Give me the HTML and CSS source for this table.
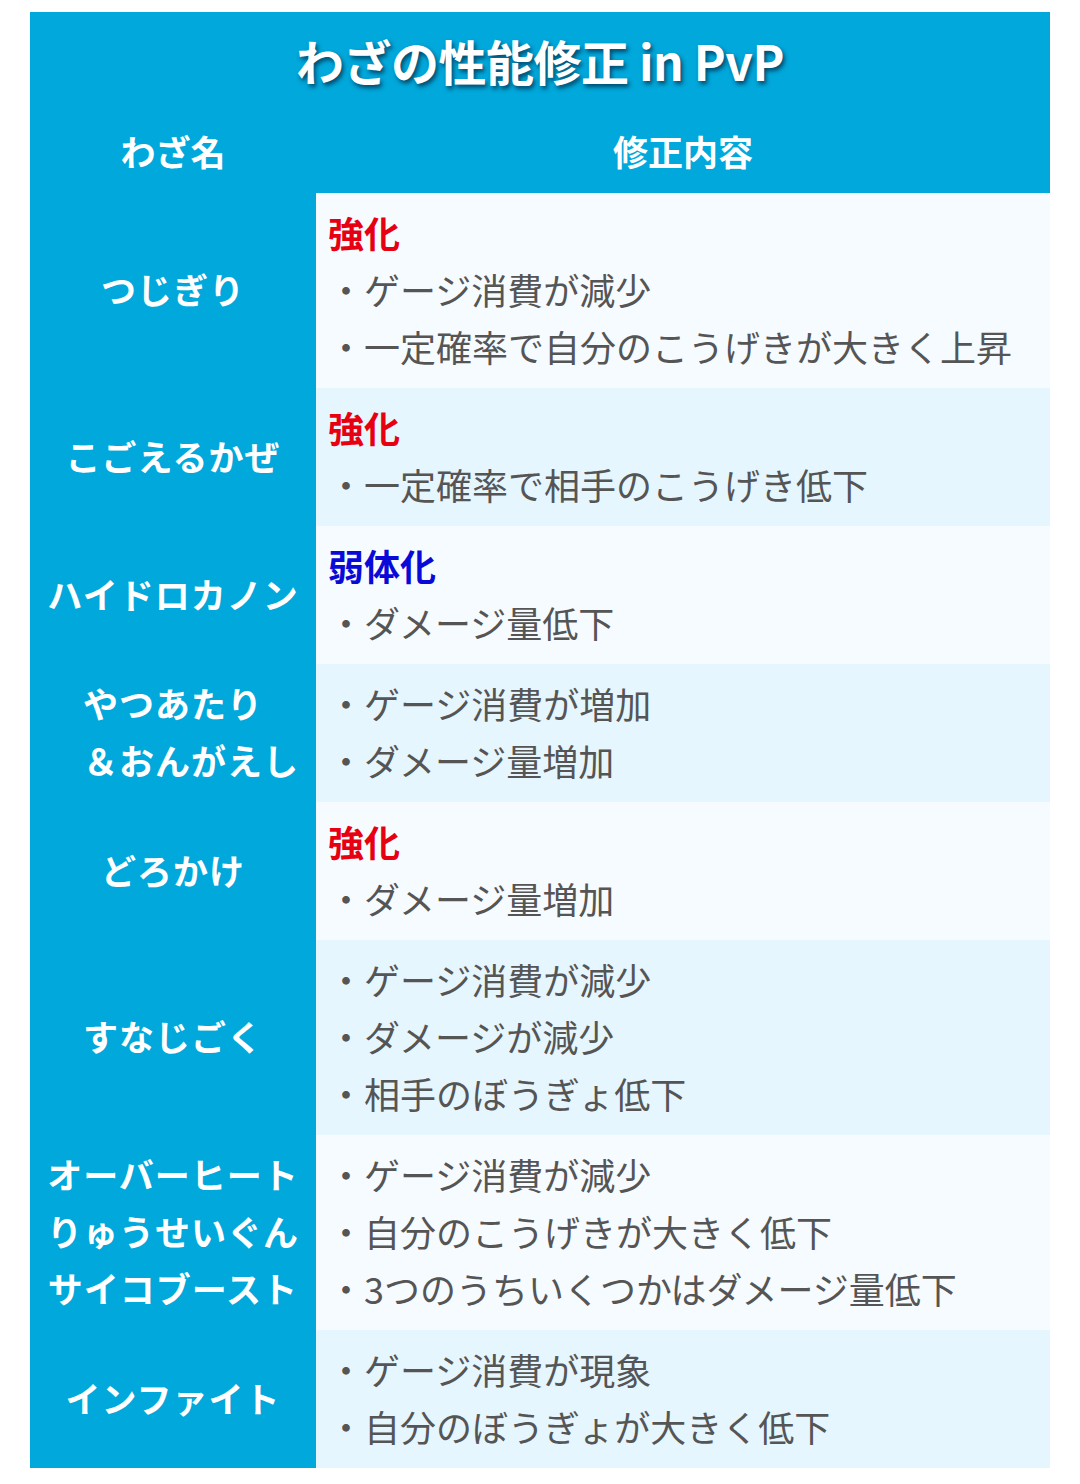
FILE: index.html
```html
<!DOCTYPE html>
<html lang="ja">
<head>
<meta charset="utf-8">
<link rel="stylesheet" href="styles.css">
</head>
<body>
<div class="board">
  <div class="title">わざの性能修正 in PvP</div>
  <div class="head">
    <div class="hname">わざ名</div>
    <div class="hdesc">修正内容</div>
  </div>
  <div class="row odd">
    <div class="name">つじぎり</div>
    <div class="desc">
      <div class="up">強化</div>
      <div>・ゲージ消費が減少</div>
      <div>・一定確率で自分のこうげきが大きく上昇</div>
    </div>
  </div>
  <div class="row even">
    <div class="name">こごえるかぜ</div>
    <div class="desc">
      <div class="up">強化</div>
      <div>・一定確率で相手のこうげき低下</div>
    </div>
  </div>
  <div class="row odd">
    <div class="name">ハイドロカノン</div>
    <div class="desc">
      <div class="down">弱体化</div>
      <div>・ダメージ量低下</div>
    </div>
  </div>
  <div class="row even">
    <div class="name"><div>やつあたり</div><div>　＆おんがえし</div></div>
    <div class="desc">
      <div>・ゲージ消費が増加</div>
      <div>・ダメージ量増加</div>
    </div>
  </div>
  <div class="row odd">
    <div class="name">どろかけ</div>
    <div class="desc">
      <div class="up">強化</div>
      <div>・ダメージ量増加</div>
    </div>
  </div>
  <div class="row even">
    <div class="name">すなじごく</div>
    <div class="desc">
      <div>・ゲージ消費が減少</div>
      <div>・ダメージが減少</div>
      <div>・相手のぼうぎょ低下</div>
    </div>
  </div>
  <div class="row odd">
    <div class="name"><div>オーバーヒート</div><div>りゅうせいぐん</div><div>サイコブースト</div></div>
    <div class="desc">
      <div>・ゲージ消費が減少</div>
      <div>・自分のこうげきが大きく低下</div>
      <div>・3つのうちいくつかはダメージ量低下</div>
    </div>
  </div>
  <div class="row even">
    <div class="name">インファイト</div>
    <div class="desc">
      <div>・ゲージ消費が現象</div>
      <div>・自分のぼうぎょが大きく低下</div>
    </div>
  </div>
</div>
</body>
</html>
```

FILE: styles.css
```css
html, body {
  margin: 0;
  padding: 0;
  background: #ffffff;
}
body {
  font-family: "Noto Sans CJK JP", "Noto Sans", sans-serif;
}
.board {
  width: 1020px;
  margin: 12px 30px 0 30px;
  background: #00a8db;
}
.title {
  height: 98px;
  display: flex;
  align-items: center;
  justify-content: center;
  color: #ffffff;
  font-size: 48px;
  font-weight: 700;
  text-shadow: 2px 3px 4px rgba(0, 40, 70, 0.75);
  letter-spacing: -0.5px;
  padding-bottom: 2px;
  box-sizing: border-box;
}
.head {
  display: grid;
  grid-template-columns: 286px 734px;
  height: 83px;
  align-items: center;
  color: #ffffff;
  font-size: 35px;
  font-weight: 700;
  text-align: center;
  padding-bottom: 2px;
  box-sizing: border-box;
}
.row {
  display: grid;
  grid-template-columns: 286px 734px;
}
.name {
  display: flex;
  flex-direction: column;
  justify-content: center;
  align-items: center;
  color: #ffffff;
  font-size: 35px;
  font-weight: 700;
  line-height: 57px;
  letter-spacing: 1px;
  background: #00a8db;
  text-align: center;
  padding-bottom: 4px;
  box-sizing: border-box;
}
.name > div {
  white-space: pre;
}
.desc {
  padding: 11px 0 13px 12px;
  font-size: 36px;
  line-height: 57px;
  color: #555555;
  white-space: nowrap;
}
.odd .desc {
  background: #f5fbff;
}
.even .desc {
  background: #e6f6fe;
}
.up {
  color: #e60012;
  font-weight: 700;
}
.down {
  color: #0a0ad8;
  font-weight: 700;
}
```
